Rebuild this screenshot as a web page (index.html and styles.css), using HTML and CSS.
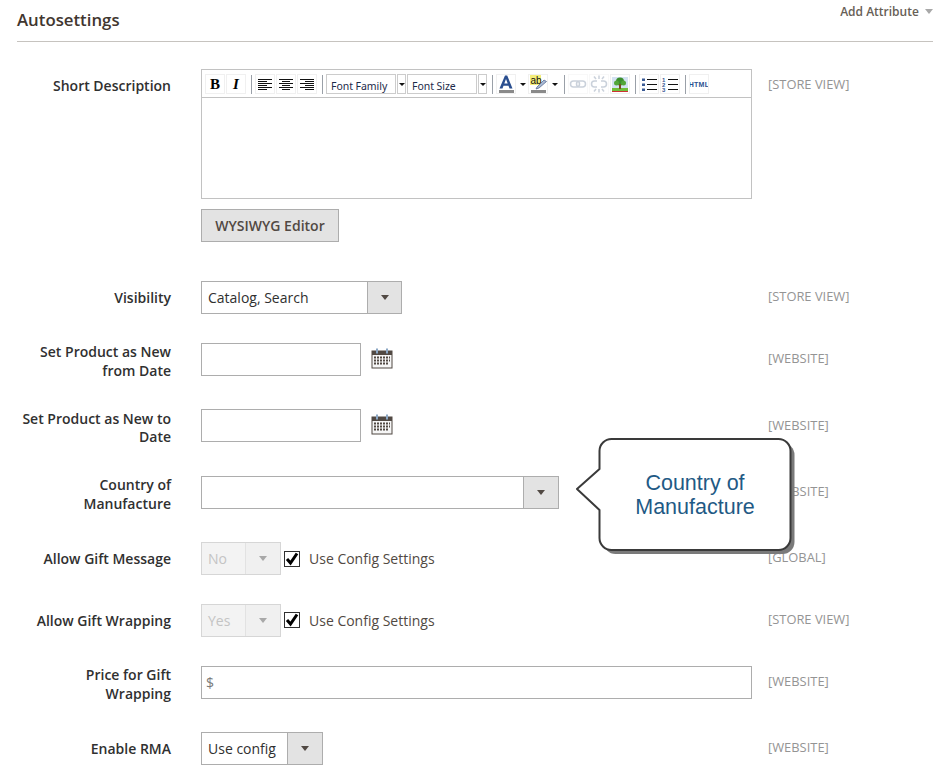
FILE: index.html
```html
<!DOCTYPE html>
<html lang="en">
<head>
    <meta charset="UTF-8">
    <meta name="viewport" content="width=device-width, initial-scale=1.0">
    <title>Autosettings</title>
    <link rel="stylesheet" href="styles.css">
</head>
<body>
    <div class="page">
        <div class="section-head">
            <h2>Autosettings</h2>
            <div class="add-attribute">Add Attribute <span class="caret-light"></span></div>
        </div>

        <div class="form-row row-editor">
            <label class="field-label one-line">Short Description</label>
            <div class="control">
                <div class="editor">
                    <div class="toolbar">
                        <span class="tool"><svg width="20" height="20" viewBox="0 0 20 20"><text x="10" y="15" class="glyph-b">B</text></svg></span>
                        <span class="tool"><svg width="20" height="20" viewBox="0 0 20 20"><text x="10" y="15" class="glyph-i">I</text></svg></span>
                        <span class="sep"></span>
                        <span class="tool"><svg width="20" height="20" viewBox="0 0 20 20"><path class="ink" d="M3 5.500h14M3 7.500h9M3 9.500h14M3 11.500h9M3 13.500h14M3 15.500h9"/></svg></span>
                        <span class="tool"><svg width="20" height="20" viewBox="0 0 20 20"><path class="ink" d="M3 5.500h14M6 7.500h8M3 9.500h14M6 11.500h8M3 13.500h14M6 15.500h8"/></svg></span>
                        <span class="tool"><svg width="20" height="20" viewBox="0 0 20 20"><path class="ink" d="M3 5.500h14M8 7.500h9M3 9.500h14M8 11.500h9M3 13.500h14M8 15.500h9"/></svg></span>
                        <span class="sep"></span>
                        <span class="list-box family">Font Family</span>
                        <span class="list-open"><i class="tiny-caret"></i></span>
                        <span class="list-box size">Font Size</span>
                        <span class="list-open"><i class="tiny-caret"></i></span>
                        <span class="sep"></span>
                        <span class="tool"><svg width="20" height="20" viewBox="0 0 20 20"><path d="M3.500 14.500 9 1.500h2.200l5.300 13h-3l-1-2.800H7.500l-1 2.800zM8.300 9.500h3.400L10 5z" fill="#2a4f8f"/><rect x="3" y="16" width="15" height="4" fill="#8a8a8a"/></svg></span>
                        <span class="tool-arrow"><i class="tiny-caret"></i></span>
                        <span class="tool"><svg width="20" height="20" viewBox="0 0 20 20"><rect x="2" y="1" width="11" height="10" fill="#f4ee7a"/><text x="2.500" y="9.500" class="glyph-ab">ab</text><path d="M9 13 16 6l2.500 1.500-7.500 6.500-3 1z" fill="#a9b9d4" stroke="#4a5f88" stroke-width=".7"/><rect x="3" y="16" width="15" height="4" fill="#8a8a8a"/></svg></span>
                        <span class="tool-arrow"><i class="tiny-caret"></i></span>
                        <span class="sep"></span>
                        <span class="tool off"><svg width="20" height="20" viewBox="0 0 20 20"><g class="chain"><rect x="2.500" y="7" width="9" height="6" rx="3"/><rect x="8.500" y="7" width="9" height="6" rx="3"/></g></svg></span>
                        <span class="tool off"><svg width="20" height="20" viewBox="0 0 20 20"><g class="chain"><path d="M8 7H5.500a3 3 0 0 0 0 6H8M12 7h2.500a3 3 0 0 1 0 6H12M10 1.500v3.500M10 15v3.500M5 2.500l2 2.500M15 2.500 13 5M5 17.500 7 15M15 17.500 13 15"/></g></svg></span>
                        <span class="tool"><svg width="20" height="20" viewBox="0 0 20 20"><rect x="2" y="3" width="16" height="14" fill="#d3e2f2"/><rect x="2" y="14" width="16" height="3" fill="#6fbf3a"/><circle cx="10" cy="7.500" r="4" fill="#3c8f2e"/><circle cx="6.500" cy="9" r="2.500" fill="#52a63a"/><circle cx="13.500" cy="9" r="2.500" fill="#52a63a"/><rect x="9" y="10" width="2" height="5" fill="#7a4a22"/><path d="M2 17.500h16" stroke="#c33"/></svg></span>
                        <span class="sep"></span>
                        <span class="tool"><svg width="20" height="20" viewBox="0 0 20 20"><path class="ink" d="M8 5.500h10M8 10.500h10M8 15.500h10"/><path class="dots" d="M3 4.500h3V7H3zM3 9.500h3V12H3zM3 14.500h3V17H3z"/></svg></span>
                        <span class="tool"><svg width="20" height="20" viewBox="0 0 20 20"><path class="ink" d="M8 5.500h10M8 10.500h10M8 15.500h10"/><text x="2" y="8" class="glyph-num">1</text><text x="2" y="13" class="glyph-num">2</text><text x="2" y="18" class="glyph-num">3</text></svg></span>
                        <span class="sep"></span>
                        <span class="tool"><svg width="20" height="20" viewBox="0 0 20 20"><text x="10" y="12.500" class="glyph-html">HTML</text></svg></span>
                    </div>
                    <div class="editor-body"></div>
                </div>
                <button class="wysiwyg-btn">WYSIWYG Editor</button>
            </div>
            <div class="scope">[STORE VIEW]</div>
        </div>

        <div class="form-row single-row">
            <label class="field-label one-line">Visibility</label>
            <div class="control">
                <div class="select vis-select"><span class="select-value">Catalog, Search</span><span class="select-arrow"></span></div>
            </div>
            <div class="scope">[STORE VIEW]</div>
        </div>

        <div class="form-row">
            <label class="field-label">Set Product as New from Date</label>
            <div class="control date-control">
                <input type="text" class="text-input date-input">
                <svg class="calendar" width="22" height="21" viewBox="0 0 22 21"><use href="#cal"></use></svg>
            </div>
            <div class="scope">[WEBSITE]</div>
        </div>

        <div class="form-row">
            <label class="field-label">Set Product as New to Date</label>
            <div class="control date-control">
                <input type="text" class="text-input date-input">
                <svg class="calendar" width="22" height="21" viewBox="0 0 22 21"><use href="#cal"></use></svg>
            </div>
            <div class="scope">[WEBSITE]</div>
        </div>

        <div class="form-row">
            <label class="field-label">Country of Manufacture</label>
            <div class="control">
                <div class="select country-select"><span class="select-value"></span><span class="select-arrow"></span></div>
            </div>
            <div class="scope">[WEBSITE]</div>
        </div>

        <div class="form-row short-row">
            <label class="field-label one-line">Allow Gift Message</label>
            <div class="control config-control">
                <div class="select small-select disabled"><span class="select-value">No</span><span class="select-arrow"></span></div>
                <span class="check"><svg width="16" height="16" viewBox="0 0 16 16"><path d="M3 8l3.500 4L13 2.500" fill="none" stroke="#000" stroke-width="3"/></svg></span>
                <span class="check-label">Use Config Settings</span>
            </div>
            <div class="scope">[GLOBAL]</div>
        </div>

        <div class="form-row short-row">
            <label class="field-label one-line">Allow Gift Wrapping</label>
            <div class="control config-control">
                <div class="select small-select disabled"><span class="select-value">Yes</span><span class="select-arrow"></span></div>
                <span class="check"><svg width="16" height="16" viewBox="0 0 16 16"><path d="M3 8l3.500 4L13 2.500" fill="none" stroke="#000" stroke-width="3"/></svg></span>
                <span class="check-label">Use Config Settings</span>
            </div>
            <div class="scope">[STORE VIEW]</div>
        </div>

        <div class="form-row">
            <label class="field-label">Price for Gift Wrapping</label>
            <div class="control">
                <div class="price-input">$</div>
            </div>
            <div class="scope">[WEBSITE]</div>
        </div>

        <div class="form-row short-row last-row">
            <label class="field-label one-line">Enable RMA</label>
            <div class="control">
                <div class="select rma-select"><span class="select-value">Use config</span><span class="select-arrow"></span></div>
            </div>
            <div class="scope">[WEBSITE]</div>
        </div>
    </div>

    <div class="callout">
        <svg class="callout-shape" width="222" height="122" viewBox="0 0 222 122">
            <rect class="callout-shadow" x="28.500" y="6" width="191" height="111" rx="12"/>
            <path class="callout-body" d="M36.500 2h167a12 12 0 0 1 12 12v87a12 12 0 0 1-12 12h-167a12 12 0 0 1-12-12V73L2 52l22.500-20V14a12 12 0 0 1 12-12z"/>
        </svg>
        <div class="callout-text">Country of<br>Manufacture</div>
    </div>

    <svg width="0" height="0" class="defs">
        <symbol id="cal" viewBox="0 0 22 21">
            <rect x="1" y="3" width="20" height="17" fill="#f6f6f6" stroke="#514943" stroke-width="1"/>
            <rect x="1" y="3" width="20" height="4" fill="#514943"/>
            <rect x="5" y="0.500" width="2" height="5" fill="#8aa6c4"/>
            <rect x="15" y="0.500" width="2" height="5" fill="#8aa6c4"/>
            <path d="M3 9.500h16M3 12.500h16M3 15.500h14" stroke="#514943" stroke-width="2" stroke-dasharray="2 1"/>
        </symbol>
    </svg>
</body>
</html>
```

FILE: styles.css
```css
* {
    margin: 0;
    padding: 0;
    box-sizing: border-box;
}

body {
    font-family: "Open Sans", "Liberation Sans", sans-serif;
    font-size: 14px;
    color: #41362f;
    background: white;
    position: relative;
    overflow-x: hidden;
}

.page {
    padding-left: 17px;
}

.section-head {
    display: flex;
    justify-content: space-between;
    height: 42px;
    border-bottom: 1px solid #c6c3bf;
    margin-bottom: 27px;
}

.section-head h2 {
    font-size: 16.800px;
    font-weight: 600;
    line-height: 24px;
    padding-top: 8px;
    color: #41362f;
}

.add-attribute {
    font-size: 12px;
    font-weight: 600;
    line-height: 16px;
    padding-top: 4px;
    color: #676056;
}

.caret-light {
    display: inline-block;
    width: 0;
    height: 0;
    margin-left: 3px;
    border-left: 4.500px solid transparent;
    border-right: 4.500px solid transparent;
    border-top: 5px solid #a8a8a8;
    vertical-align: 2px;
}

.form-row {
    display: grid;
    grid-template-columns: 154px 551px 1fr;
    column-gap: 30px;
    min-height: 38px;
    margin-bottom: 28.400px;
}

.form-row.row-editor {
    margin-bottom: 39px;
}

.form-row.single-row {
    min-height: 33px;
    margin-bottom: 29px;
}

.form-row.short-row {
    min-height: 33px;
    margin-bottom: 28.800px;
}

.form-row.last-row {
    margin-bottom: 0;
}

.field-label {
    font-size: 14px;
    font-weight: 600;
    line-height: 18.500px;
    text-align: right;
    padding-left: 3px;
    margin-top: 0.300px;
    color: #303030;
}

.field-label.one-line {
    padding-top: 8px;
}

.control {
    min-width: 0;
}

.scope {
    font-size: 12.900px;
    line-height: 16px;
    padding-top: 7.300px;
    margin-left: -14px;
    color: #949494;
}

.editor {
    width: 551px;
    height: 130px;
    border: 1px solid #c2c2c2;
}

.toolbar {
    height: 28px;
    border-bottom: 1px solid #c2c2c2;
    display: flex;
    align-items: center;
    gap: 1px;
    padding: 1px 0 0 3px;
}

.tool {
    width: 20px;
    height: 20px;
    display: block;
    outline: 1px solid #f0f0f0;
    outline-offset: -1px;
}

.tool.off {
    opacity: 0.45;
}

.tool svg {
    display: block;
}

.tool-arrow {
    width: 9px;
    height: 20px;
    margin-left: 1px;
    display: flex;
    align-items: center;
    justify-content: center;
}

.sep {
    width: 1px;
    height: 19px;
    background: #9aa0a8;
    margin: 0 2px 0 4px;
}

.list-box {
    height: 20px;
    border: 1px solid #cccccc;
    font-family: "Noto Sans", "Liberation Sans", sans-serif;
    font-size: 10.500px;
    letter-spacing: -0.050px;
    line-height: 22px;
    padding-left: 4px;
    color: #1c2b4a;
    white-space: nowrap;
    overflow: hidden;
}

.list-box.family {
    width: 70px;
}

.list-box.size {
    width: 70px;
}

.list-open {
    width: 9px;
    height: 20px;
    border: 1px solid #cccccc;
    display: flex;
    align-items: center;
    justify-content: center;
}

.tiny-caret {
    display: block;
    width: 0;
    height: 0;
    border-left: 3px solid transparent;
    border-right: 3px solid transparent;
    border-top: 3px solid #111111;
}

.editor-body {
    height: 100px;
}

.ink {
    fill: none;
    stroke: #111111;
    stroke-width: 1;
}

.dots {
    fill: #3a5a94;
}

.chain {
    fill: none;
    stroke: #8c9bb0;
    stroke-width: 1.500;
}

.glyph-b {
    font-family: "Liberation Serif", serif;
    font-size: 15px;
    font-weight: 700;
    text-anchor: middle;
    fill: #000;
}

.glyph-i {
    font-family: "Liberation Serif", serif;
    font-size: 15px;
    font-weight: 700;
    font-style: italic;
    text-anchor: middle;
    fill: #000;
}

.glyph-ab {
    font-family: "Liberation Sans", sans-serif;
    font-size: 10px;
    fill: #111;
}

.glyph-num {
    font-family: "Liberation Sans", sans-serif;
    font-size: 6px;
    font-weight: 700;
    fill: #3a5a94;
}

.glyph-html {
    font-family: "Liberation Sans", sans-serif;
    font-size: 7px;
    font-weight: 700;
    letter-spacing: 0.300px;
    text-anchor: middle;
    fill: #2a4f8f;
}

.wysiwyg-btn {
    display: block;
    margin-top: 10px;
    width: 138px;
    height: 33px;
    background: #e3e3e3;
    border: 1px solid #adadad;
    font-family: "Open Sans", sans-serif;
    font-size: 14px;
    font-weight: 600;
    color: #514943;
}

.select {
    display: flex;
    height: 33px;
    background: white;
    border: 1px solid #adadad;
    font-size: 14px;
    color: #303030;
}

.select-value {
    flex: 1;
    padding-left: 6px;
    line-height: 31px;
}

.select-arrow {
    width: 34px;
    background: #e3e3e3;
    border-left: 1px solid #adadad;
    position: relative;
}

.select-arrow::after {
    content: "";
    position: absolute;
    left: 13px;
    top: 13px;
    border-left: 4.500px solid transparent;
    border-right: 4.500px solid transparent;
    border-top: 5px solid #514943;
}

.vis-select {
    width: 201px;
}

.country-select {
    width: 358px;
}

.country-select .select-arrow,
.rma-select .select-arrow {
    width: 35px;
}

.rma-select {
    width: 122px;
}

.small-select {
    width: 80px;
    height: 33px;
}

.small-select .select-arrow {
    width: 35px;
}

.select.disabled {
    background: #f3f3f3;
    border-color: #d6d6d6;
    color: #c4c4c4;
}

.select.disabled .select-arrow {
    background: #f0f0f0;
    border-left-color: #e2e2e2;
}

.select.disabled .select-arrow::after {
    border-top-color: #a8a8a8;
}

.text-input {
    display: block;
    height: 33px;
    border: 1px solid #adadad;
}

.date-control {
    display: flex;
    gap: 10px;
}

.date-input {
    width: 160px;
}

.calendar {
    margin-top: 5px;
}

.config-control {
    display: flex;
    align-items: center;
    height: 33px;
}

.check {
    width: 16px;
    height: 16px;
    margin-left: 3px;
    border: 1px solid #303030;
    display: block;
}

.check svg {
    display: block;
    margin: -1px;
}

.check-label {
    margin-left: 9px;
    font-size: 14px;
    color: #514943;
}

.price-input {
    width: 551px;
    height: 33px;
    border: 1px solid #adadad;
    padding-left: 4px;
    line-height: 31px;
    color: #7a7a7a;
}

.callout {
    position: absolute;
    left: 575px;
    top: 437px;
    width: 222px;
    height: 122px;
}

.callout-shape {
    position: absolute;
    left: 0;
    top: 0;
    overflow: visible;
}

.callout-shadow {
    fill: #7a7a7a;
}

.callout-body {
    fill: white;
    stroke: #3a3a3a;
    stroke-width: 2;
    stroke-linejoin: round;
}

.callout-text {
    position: relative;
    width: 240px;
    padding-top: 34px;
    text-align: center;
    font-family: "Liberation Sans", Arial, sans-serif;
    font-size: 21.500px;
    line-height: 24px;
    color: #1f5a85;
}

.defs {
    position: absolute;
}
```
